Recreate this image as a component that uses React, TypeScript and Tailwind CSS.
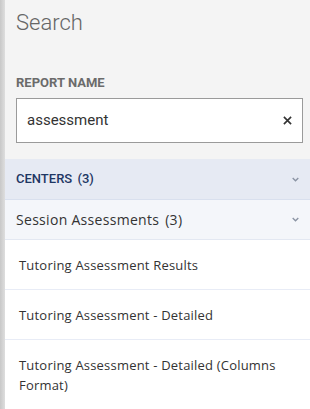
import React from "react";

const ITEMS = [
  "Tutoring Assessment Results",
  "Tutoring Assessment - Detailed",
  "Tutoring Assessment - Detailed (Columns Format)",
];

function Chevron() {
  return (
    <svg viewBox="0 0 8 5" className="w-[7px] h-[5px]" fill="none" stroke="#8a93a3" strokeWidth="1.5">
      <path d="M0.8 0.8l3.2 3.2 3.2-3.2" />
    </svg>
  );
}

export default function App() {
  return (
    <div className="w-[310px] h-[409px] flex bg-[#f4f4f4] overflow-hidden">
      {/* left shadow bar */}
      <div className="w-[5px] shrink-0 bg-gradient-to-r from-[#c8c8c8] to-[#dedede]" />
      <div className="flex-1 flex flex-col min-w-0">
        <div className="pl-[11px] pr-[7px]">
          <h1 className="pt-[9px] text-[22px] leading-[28px] font-light text-[#666] font-['Roboto',sans-serif]">
            Search
          </h1>
          <div className="mt-[38px] text-[13px] leading-[15px] font-bold text-[#6b6b6b] font-['Roboto',sans-serif]">
            REPORT NAME
          </div>
          <div className="mt-[8px] h-[45px] border border-[#9a9a9a] bg-white flex items-center pl-[10px] pr-[10px]">
            <span className="flex-1 text-[15px] text-[#333] font-['Roboto',sans-serif]">assessment</span>
            <svg viewBox="0 0 10 10" className="w-[9px] h-[9px]" stroke="#333" strokeWidth="1.8">
              <path d="M1 1l8 8M9 1l-8 8" />
            </svg>
          </div>
        </div>
        <div className="mt-[16px] h-[42px] bg-[#e6eaf3] border-b border-[#d9e0ee] flex items-center pl-[11px] pr-[11px]">
          <span className="flex-1 text-[13px] font-medium text-[#1e3764] font-['Roboto',sans-serif]">
            CENTERS <span className="ml-[2px]">(3)</span>
          </span>
          <Chevron />
        </div>
        <div className="h-[40px] bg-[#f4f6fa] border-b border-[#e3e8f2] flex items-center pl-[11px] pr-[11px]">
          <span className="flex-1 text-[14px] tracking-[0.3px] text-[#333] font-['Open_Sans',sans-serif]">
            Session Assessments <span className="ml-[2px]">(3)</span>
          </span>
          <Chevron />
        </div>
        <div className="flex-1 bg-white">
          {ITEMS.map((t, i) => (
            <div
              key={t}
              className={`pl-[14px] pr-[20px] pt-[15px] pb-[14px] text-[13px] leading-[20px] tracking-[0.2px] text-[#333] font-['Open_Sans',sans-serif] ${
                i < ITEMS.length - 1 ? "border-b border-[#e8ecf6]" : ""
              }`}
            >
              {t}
            </div>
          ))}
        </div>
      </div>
    </div>
  );
}
